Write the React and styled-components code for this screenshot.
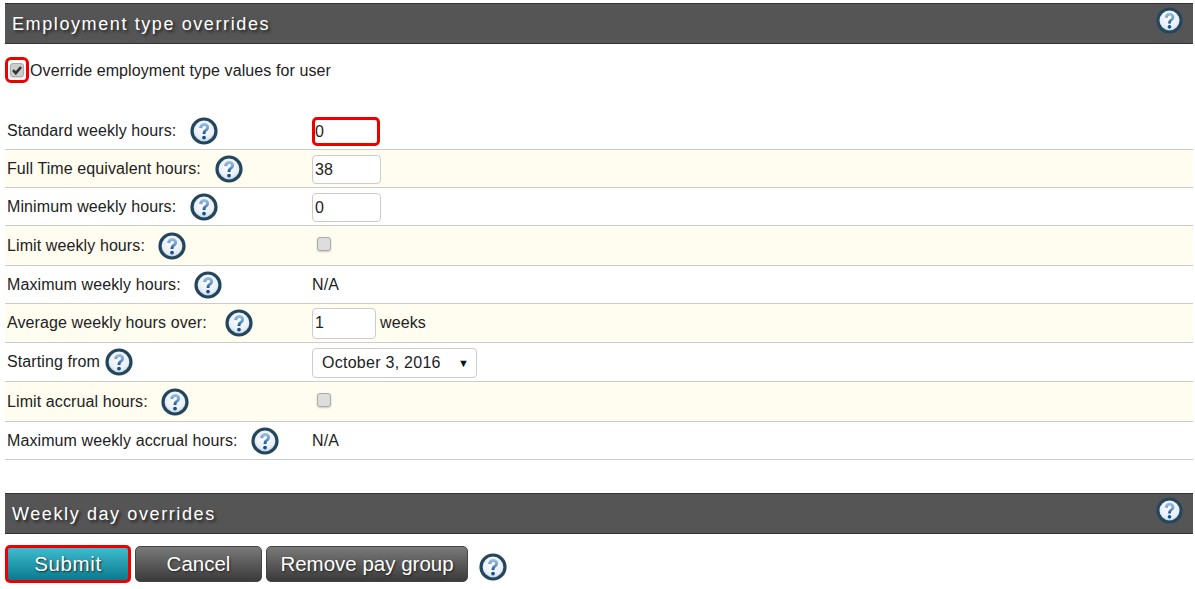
import React from "react";
import styled, { createGlobalStyle } from "styled-components";

const GlobalStyle = createGlobalStyle`
  body {
    margin: 0;
    background: #fff;
    font-family: "Liberation Sans", Arial, sans-serif;
    font-size: 16px;
    letter-spacing: 0.1px;
    color: #222;
  }
`;

const Page = styled.div`
  width: 1188px;
  margin-left: 5px;
  padding-top: 3px;
`;

const SectionBar = styled.div`
  height: 36px;
  background: #555;
  border-top: 1px solid #333;
  border-bottom: 1px solid #333;
  display: flex;
  align-items: flex-start;
  justify-content: space-between;
  padding: 3px 10px 0 7px;

  h2 {
    margin: 5px 0 0;
    font-size: 18px;
    line-height: 24px;
    font-weight: normal;
    letter-spacing: 1.6px;
    color: #fff;
    text-shadow: 2px 2px 3px #222;
  }
`;

const LowerBar = styled(SectionBar)`
  margin-top: 33px;
`;

const OverrideRow = styled.div`
  display: flex;
  align-items: center;
  gap: 1px;
  height: 26px;
  margin-top: 13px;
  margin-bottom: 29px;

  span {
    padding-top: 2px;
  }
`;

const RedBox = styled.div`
  width: 24px;
  height: 26px;
  border: 3px solid #ee0000;
  border-radius: 6px;
  box-sizing: border-box;
  display: flex;
  align-items: center;
  justify-content: center;
`;

const CheckBox = styled.div`
  width: 14px;
  height: 14px;
  border: 1px solid #aaa;
  border-radius: 3px;
  box-sizing: border-box;
  background: ${(p) => (p.$checked ? "#ccc" : "#ddd")};
  box-shadow: 0 1px 2px rgba(0, 0, 0, 0.2);
  display: flex;
  align-items: center;
  justify-content: center;
`;

const RowCheck = styled(CheckBox)`
  margin: 0 0 4px 5px;
`;

const Table = styled.div`
  display: flex;
  flex-direction: column;
`;

const Row = styled.div`
  display: grid;
  grid-template-columns: 307px 1fr;
  align-items: center;
  height: ${(p) => p.$height}px;
  box-sizing: border-box;
  border-bottom: 1px solid #ccc;
  background: ${(p) => (p.$alt ? "#fffcf0" : "#fff")};
`;

const LabelCell = styled.div`
  display: flex;
  align-items: center;
  gap: ${(p) => p.$gap}px;
  padding-left: 2px;
`;

const ValueCell = styled.div`
  display: flex;
  align-items: center;
  gap: 4px;
`;

const NumInput = styled.input`
  width: ${(p) => p.$w || 69}px;
  height: ${(p) => p.$h || 29}px;
  margin-top: ${(p) => (p.$h ? "0" : "2px")};
  box-sizing: border-box;
  padding: 0 ${(p) => (p.$red ? "0" : "2px")};
  font: inherit;
  color: inherit;
  background: #fff;
  border-radius: ${(p) => (p.$red ? "5px" : "4px")};
  outline: none;
  border: ${(p) => (p.$red ? "3px solid #ee0000" : "1px solid #ccc")};
`;

const DateSelect = styled.div`
  width: 165px;
  height: 30px;
  margin-top: 2px;
  box-sizing: border-box;
  display: flex;
  align-items: center;
  justify-content: space-between;
  padding: 0 7px 0 9px;
  letter-spacing: 0.27px;
  background: #fff;
  border: 1px solid #ccc;
  border-radius: 4px;
`;

const Arrow = styled.span`
  font-size: 11px;
  letter-spacing: 0;
  color: #111;
`;

const Actions = styled.div`
  display: flex;
  align-items: center;
  gap: 4px;
  margin-top: 11px;
`;

const Button = styled.button`
  width: ${(p) => p.$w}px;
  height: ${(p) => (p.$primary ? "38px" : "36px")};
  padding: 0;
  font-family: inherit;
  font-size: 20.5px;
  letter-spacing: ${(p) => (p.$primary ? "0.6px" : "0")};
  color: #fff;
  text-shadow: 1px 1px 2px #222;
  border-radius: 5px;
  cursor: pointer;
  border: ${(p) => (p.$primary ? "3px solid #ee0000" : "1px solid #444")};
  background: ${(p) =>
    p.$primary
      ? "linear-gradient(#3dbccd, #0a7a90)"
      : "linear-gradient(#7a7a7a, #3a3a3a)"};
`;

const HelpSlot = styled.div`
  display: flex;
  margin-left: 7px;
  margin-top: 6px;
`;

function HelpIcon({ size = 28 }) {
  return (
    <svg width={size} height={size} viewBox="0 0 28 28">
      <defs>
        <radialGradient id="helpFill" cx="50%" cy="40%" r="60%">
          <stop offset="0%" stopColor="#ffffff" />
          <stop offset="70%" stopColor="#e6eef6" />
          <stop offset="100%" stopColor="#a9c2da" />
        </radialGradient>
        <linearGradient id="helpMark" x1="0" y1="0" x2="0" y2="1">
          <stop offset="0%" stopColor="#a3c3e3" />
          <stop offset="55%" stopColor="#6d9ccb" />
          <stop offset="100%" stopColor="#154f8e" />
        </linearGradient>
      </defs>
      <circle cx="14" cy="14" r="12" fill="url(#helpFill)" stroke="#24465c" strokeWidth="3.2" />
      <path
        d="M9.2 11c0-3 2.2-5.1 5-5.1 2.8 0 4.9 1.8 4.9 4.4 0 2-1.1 3-2.4 4-1 .8-1.2 1.3-1.2 2.8h-2.9c0-2.3.5-3.4 1.9-4.5 1-.8 1.6-1.2 1.6-2.1 0-.9-.8-1.6-1.8-1.6-1.1 0-1.9.7-2 2.4z"
        fill="url(#helpMark)"
      />
      <circle cx="14" cy="20.6" r="1.9" fill="#15508f" />
    </svg>
  );
}

const rows = [
  { label: "Standard weekly hours:", gap: 14, height: 38, value: <NumInput $red $w={68} defaultValue="0" /> },
  { label: "Full Time equivalent hours:", gap: 14, height: 38, alt: true, value: <NumInput defaultValue="38" /> },
  { label: "Minimum weekly hours:", gap: 14, height: 38, value: <NumInput defaultValue="0" /> },
  { label: "Limit weekly hours:", gap: 13, height: 40, alt: true, value: <RowCheck /> },
  { label: "Maximum weekly hours:", gap: 13, height: 38, value: <span>N/A</span> },
  {
    label: "Average weekly hours over:",
    gap: 18,
    height: 39,
    alt: true,
    value: (
      <>
        <NumInput $w={64} $h={31} defaultValue="1" />
        <span>weeks</span>
      </>
    ),
  },
  {
    label: "Starting from",
    gap: 5,
    height: 39,
    value: (
      <DateSelect>
        <span>October 3, 2016</span>
        <Arrow>▼</Arrow>
      </DateSelect>
    ),
  },
  { label: "Limit accrual hours:", gap: 13, height: 40, alt: true, value: <RowCheck /> },
  { label: "Maximum weekly accrual hours:", gap: 13, height: 38, value: <span>N/A</span> },
];

function App() {
  return (
    <Page>
      <GlobalStyle />
      <SectionBar>
        <h2>Employment type overrides</h2>
        <HelpIcon size={27} />
      </SectionBar>

      <OverrideRow>
        <RedBox>
          <CheckBox $checked>
            <svg width="10" height="10" viewBox="0 0 10 10">
              <path d="M1 5.2 3.8 8.2 9 2" fill="none" stroke="#333" strokeWidth="2.6" />
            </svg>
          </CheckBox>
        </RedBox>
        <span>Override employment type values for user</span>
      </OverrideRow>

      <Table>
        {rows.map((row) => (
          <Row key={row.label} $alt={row.alt} $height={row.height}>
            <LabelCell $gap={row.gap}>
              <span>{row.label}</span>
              <HelpIcon />
            </LabelCell>
            <ValueCell>{row.value}</ValueCell>
          </Row>
        ))}
      </Table>

      <LowerBar>
        <h2>Weekly day overrides</h2>
        <HelpIcon size={27} />
      </LowerBar>

      <Actions>
        <Button $primary $w={126}>Submit</Button>
        <Button $w={127}>Cancel</Button>
        <Button $w={202}>Remove pay group</Button>
        <HelpSlot>
          <HelpIcon />
        </HelpSlot>
      </Actions>
    </Page>
  );
}

export default App;
